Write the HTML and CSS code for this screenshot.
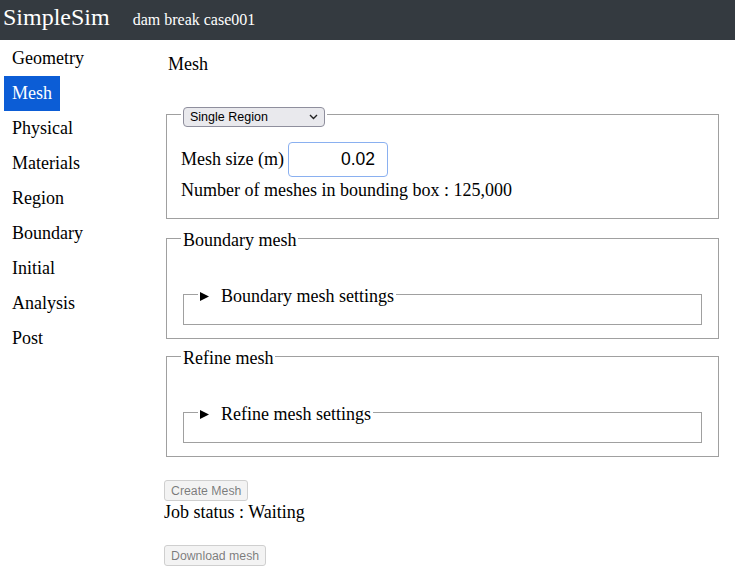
FILE: index.html
```html
<!DOCTYPE html>
<html lang="en">
<head>
<meta charset="utf-8">
<title>SimpleSim</title>
<link rel="stylesheet" href="styles.css">
</head>
<body>
<header class="topbar">
  <span class="brand">SimpleSim</span>
  <span class="case-name">dam break case001</span>
</header>
<div class="layout">
  <nav class="sidebar">
    <a class="nav-item">Geometry</a>
    <a class="nav-item active">Mesh</a>
    <a class="nav-item">Physical</a>
    <a class="nav-item">Materials</a>
    <a class="nav-item">Region</a>
    <a class="nav-item">Boundary</a>
    <a class="nav-item">Initial</a>
    <a class="nav-item">Analysis</a>
    <a class="nav-item">Post</a>
  </nav>
  <main class="content">
    <div class="page-title">Mesh</div>

    <fieldset class="box box-region">
      <legend class="select-legend">
        <span class="select-wrap">
          <select class="region-select"><option>Single Region</option></select>
          <svg class="chevron" width="9" height="6" viewBox="0 0 9 6"><path d="M1 1 L4.5 4.5 L8 1" fill="none" stroke="#222" stroke-width="1.4"/></svg>
        </span>
      </legend>
      <div class="mesh-row">Mesh size (m) <input class="mesh-input" type="text" value="0.02"></div>
      <div class="mesh-count">Number of meshes in bounding box : 125,000</div>
    </fieldset>

    <fieldset class="box box-group box-boundary">
      <legend class="group-legend">Boundary mesh</legend>
      <fieldset class="sub">
        <legend class="sub-legend">
          <details><summary><svg class="tri" width="9" height="9" viewBox="0 0 9 9"><path d="M0 0 L9 4.5 L0 9 Z" fill="#000"/></svg><span>Boundary mesh settings</span></summary></details>
        </legend>
      </fieldset>
    </fieldset>

    <fieldset class="box box-group box-refine">
      <legend class="group-legend">Refine mesh</legend>
      <fieldset class="sub">
        <legend class="sub-legend">
          <details><summary><svg class="tri" width="9" height="9" viewBox="0 0 9 9"><path d="M0 0 L9 4.5 L0 9 Z" fill="#000"/></svg><span>Refine mesh settings</span></summary></details>
        </legend>
      </fieldset>
    </fieldset>

    <div class="actions">
      <button class="btn" disabled>Create Mesh</button>
      <div class="job">Job status : Waiting</div>
      <button class="btn btn-download" disabled>Download mesh</button>
    </div>
  </main>
</div>
</body>
</html>
```

FILE: styles.css
```css
html, body {
  margin: 0;
  padding: 0;
  background: #fff;
}
body {
  font-family: "Liberation Serif", "Times New Roman", serif;
  font-size: 18px;
  color: #000;
}
.topbar {
  height: 40px;
  box-sizing: border-box;
  background: #343a40;
  color: #fff;
  display: flex;
  align-items: baseline;
  padding: 3px 0 0 3px;
}
.brand {
  font-size: 24px;
  line-height: 28px;
}
.case-name {
  font-size: 16px;
  margin-left: 23px;
}
.layout {
  display: grid;
  grid-template-columns: 164px 1fr;
}
.sidebar {
  display: flex;
  flex-direction: column;
  align-items: flex-start;
  padding: 1px 0 0 4px;
}
.nav-item {
  display: block;
  padding: 7px 8px;
  line-height: 21px;
  color: #000;
  text-decoration: none;
}
.nav-item.active {
  background: #0c5dd6;
  color: #fff;
}
.content {
  padding: 14px 14px 0 0;
  line-height: 21px;
}
.page-title {
  padding-left: 4px;
  margin-bottom: 32px;
}
.box {
  margin: 0 2px;
  border: 1px solid #a0a0a0;
  padding: 6px 14px 13px;
  min-width: 0;
}
.box-region {
  padding-bottom: 17px;
}
.select-legend {
  padding: 0 2px;
  height: 14px;
  line-height: 14px;
}
.select-wrap {
  position: relative;
  display: block;
}
.region-select {
  appearance: none;
  -webkit-appearance: none;
  display: block;
  width: 142px;
  height: 20px;
  box-sizing: border-box;
  margin: 0;
  padding: 0 0 0 6px;
  background: #e9e9ed;
  border: 1px solid #8f8f9d;
  border-radius: 4px;
  font-family: "Liberation Sans", Arial, sans-serif;
  font-size: 12.5px;
  color: #000;
}
.chevron {
  position: absolute;
  right: 7px;
  top: 7px;
}
.mesh-row {
  margin-top: 15px;
  display: flex;
  align-items: center;
  gap: 4px;
}
.mesh-input {
  width: 100px;
  height: 35px;
  box-sizing: border-box;
  margin: 0;
  padding: 0 12px 0 4px;
  border: 1px solid #8ab0f0;
  border-radius: 4px;
  text-align: right;
  font-family: "Liberation Sans", Arial, sans-serif;
  font-size: 17.5px;
  color: #000;
  outline: none;
}
.mesh-count {
  margin-top: 3px;
}
.box-boundary {
  margin-top: 7px;
}
.box-refine {
  margin-top: 5px;
}
.group-legend {
  padding: 4px 2px 0;
}
.sub {
  margin: 25px 2px 0;
  border: 1px solid #a0a0a0;
  padding: 6px 14px 11px;
  min-width: 0;
}
.sub-legend {
  padding: 4px 2px 0;
}
.sub-legend details,
.sub-legend summary {
  display: block;
}
.sub-legend summary {
  list-style: none;
  display: flex;
  align-items: center;
}
.sub-legend summary::-webkit-details-marker {
  display: none;
}
.tri {
  margin-right: 12px;
  margin-top: -1px;
}
.actions {
  margin-top: 23px;
  display: flex;
  flex-direction: column;
  align-items: flex-start;
}
.btn {
  height: 21px;
  box-sizing: border-box;
  margin: 0;
  padding: 0 6px;
  font-family: "Liberation Sans", Arial, sans-serif;
  font-size: 12.3px;
  color: rgba(16, 16, 16, 0.55);
  background: #f3f3f3;
  border: 1px solid #cfcfcf;
  border-radius: 3px;
}
.job {
  line-height: 22px;
}
.btn-download {
  margin-top: 22px;
}
```
